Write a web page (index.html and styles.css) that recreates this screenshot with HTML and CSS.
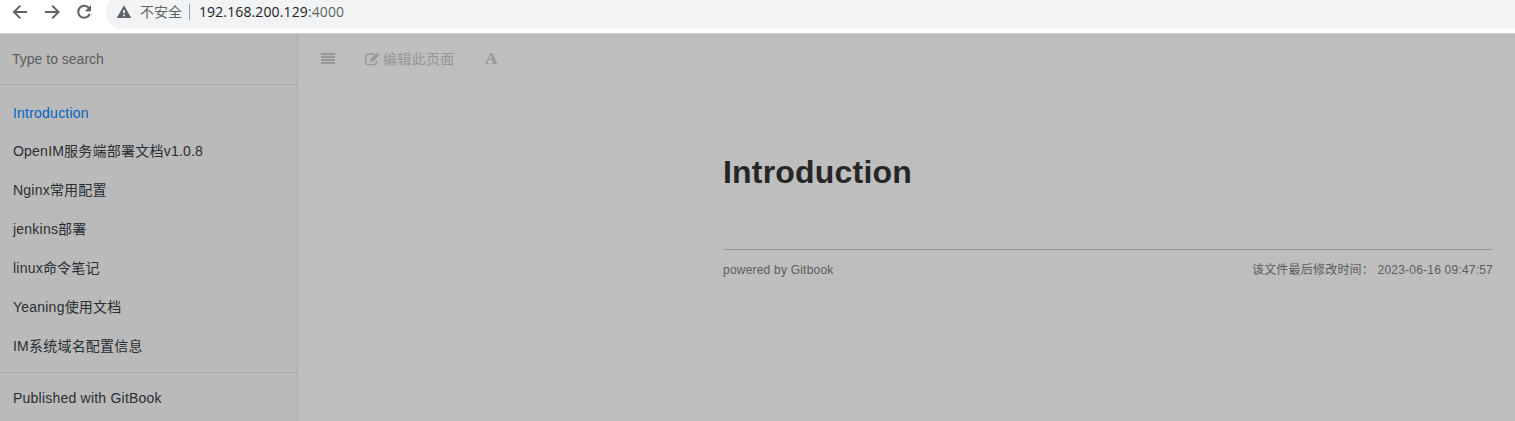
FILE: index.html
```html
<!DOCTYPE html>
<html lang="zh-CN">
<head>
<meta charset="utf-8">
<title>Introduction</title>
<link rel="stylesheet" href="styles.css">
</head>
<body>
<header class="browser">
  <svg class="nav" width="100" height="28" viewBox="0 0 100 28" fill="none" stroke="#5f6368" stroke-width="2">
    <path d="M27 12H14.5M20.3 5.6L14 12l6.300 6.400"/>
    <path d="M45 12h12.500M52.200 5.600L58.500 12l-6.300 6.400"/>
    <path d="M88.900 7.900A6 6 0 1 0 89.800 14"/>
    <path d="M91 5v6.200h-6.200z" fill="#5f6368" stroke="none"/>
  </svg>
  <div class="omnibox">
    <svg class="warn" width="16" height="16" viewBox="0 0 16 16"><path d="M8 1.200L15.300 14H.7z" fill="#5f6368"/><path d="M7.200 6h1.700v3.300H7.200zM7.200 10.600h1.700v1.700H7.200z" fill="#f1f3f4"/></svg>
    <span class="insecure">不安全</span>
    <span class="sep"></span>
    <span class="url">192.168.200.129<span class="port">:4000</span></span>
  </div>
</header>
<div class="book">
  <aside class="sidebar">
    <div class="search">Type to search</div>
    <nav class="summary">
      <a class="item active">Introduction</a>
      <a class="item">OpenIM服务端部署文档v1.0.8</a>
      <a class="item">Nginx常用配置</a>
      <a class="item">jenkins部署</a>
      <a class="item">linux命令笔记</a>
      <a class="item">Yeaning使用文档</a>
      <a class="item">IM系统域名配置信息</a>
    </nav>
    <a class="item published">Published with GitBook</a>
  </aside>
  <main class="body">
    <div class="toolbar">
      <svg class="menu" width="14" height="12" viewBox="0 0 14 12" fill="#969696"><path d="M0 0h14v2H0zM0 3h14v2H0zM0 6h14v2H0zM0 9h14v2H0z"/></svg>
      <span class="edit"><svg width="15" height="13" viewBox="0 0 15 13"><path d="M10 1H3Q.7 1 .7 3.300v6Q.7 11.600 3 11.600h6q2.300 0 2.300-2.300V7.800" fill="none" stroke="#969696" stroke-width="1.300"/><path d="M5.200 6.600L11.100.7l2.300 2.300-5.900 5.900H5.200zM11.700.2q.6-.4 1.100 0l1.200 1.200q.5.500 0 1.100l-.3.300-2.300-2.300z" fill="#969696"/><path d="M6.200 6.900l1.100 1.100" stroke="#bebebe" stroke-width=".8"/></svg><span class="label">编辑此页面</span></span>
      <span class="font">A</span>
    </div>
    <article class="page">
      <h1>Introduction</h1>
      <footer class="footer"><span>powered by Gitbook</span><span>该文件最后修改时间： 2023-06-16 09:47:57</span></footer>
    </article>
  </main>
</div>
</body>
</html>
```
FILE: styles.css
```css
* { box-sizing: border-box; }
body {
  margin: 0;
  height: 421px;
  overflow: hidden;
  background: #bebebe;
  font-family: "Liberation Sans", "Noto Sans CJK SC", sans-serif;
  font-size: 14px;
}
.browser {
  display: flex;
  height: 34px;
  background: #fff;
  border-bottom: 1px solid #d0d0d0;
}
.nav { flex: none; margin-right: 6px; }
.omnibox {
  flex: 1;
  display: flex;
  align-items: center;
  height: 34px;
  margin-top: -5px;
  padding: 0 0 0 10px;
  border-radius: 17px 0 0 17px;
  background: #f1f3f4;
  color: #5f6368;
  font-family: "Open Sans", "Noto Sans CJK SC", sans-serif;
  white-space: nowrap;
}
.warn { margin-right: 8px; }
.insecure { width: 49px; line-height: 20px; }
.sep { width: 1px; height: 16px; margin-right: 9px; background: #9a9da1; }
.url { color: #202124; line-height: 20px; letter-spacing: .12px; }
.port { color: #5f6368; }
.book { display: flex; height: 387px; }
.sidebar {
  width: 298px;
  background: #bababa;
  border-right: 1px solid #aaa;
}
.search {
  height: 51px;
  padding-left: 12px;
  border-bottom: 1px solid #aaa;
  color: #5c5c5c;
  line-height: 50px;
}
.summary {
  height: 288px;
  padding-top: 9px;
  border-bottom: 1px solid #aaa;
}
.item {
  display: block;
  height: 39px;
  padding-left: 13px;
  color: #292e33;
  line-height: 37px;
  letter-spacing: .22px;
}
.active { color: #0065c4; line-height: 39px; }
.published { padding-top: 6px; line-height: 39px; }
.body { flex: 1; }
.toolbar {
  display: flex;
  align-items: center;
  height: 50px;
  padding-left: 23px;
  color: #969696;
}
.menu { margin-right: 30px; }
.edit { display: flex; align-items: center; width: 120px; }
.edit svg { margin-right: 3px; }
.label { padding-bottom: 2px; letter-spacing: .3px; }
.font { font: bold 17px "Liberation Serif", serif; }
.page { width: 770px; margin-left: 425px; padding-top: 64px; }
h1 {
  margin: 0;
  height: 101px;
  color: #262626;
  font-size: 32px;
  line-height: 48px;
  letter-spacing: .2px;
}
.footer {
  display: flex;
  justify-content: space-between;
  border-top: 1px solid #949494;
  color: #5c5c5c;
  font-size: 12px;
  line-height: 40px;
  letter-spacing: .21px;
}
```
